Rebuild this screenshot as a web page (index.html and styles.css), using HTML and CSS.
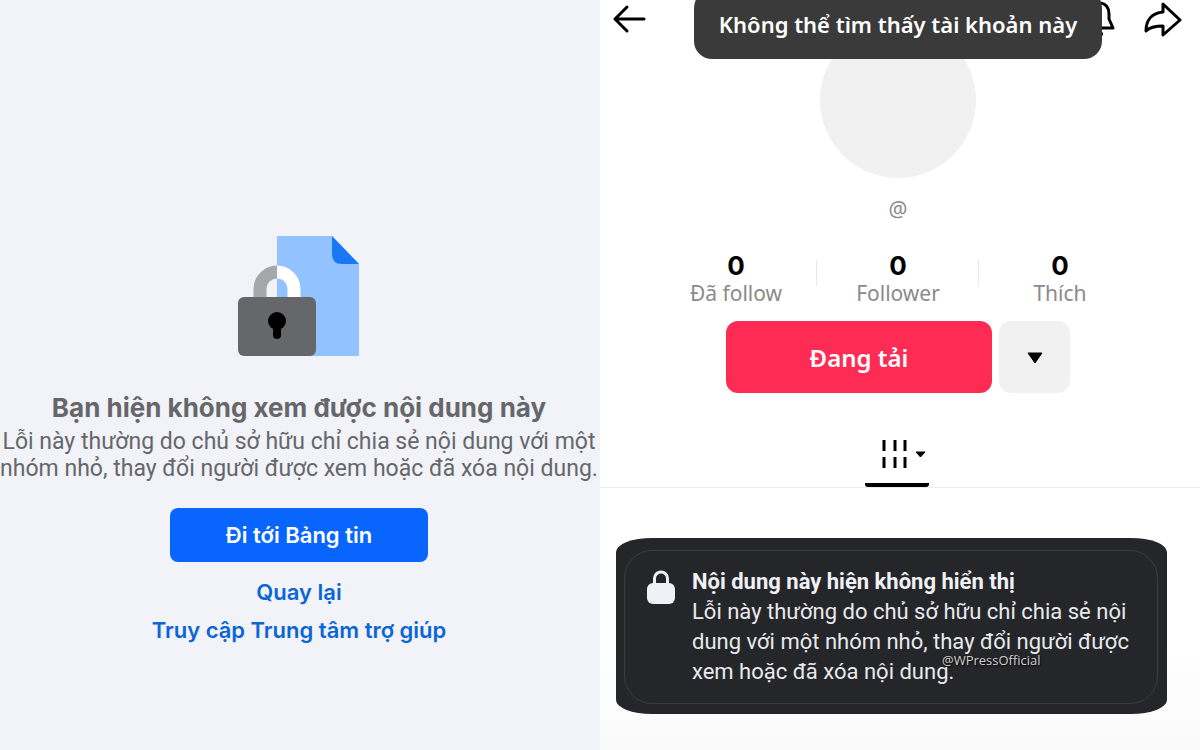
FILE: index.html
```html
<!DOCTYPE html>
<html lang="vi">
<head>
    <meta charset="UTF-8">
    <meta name="viewport" content="width=device-width, initial-scale=1.0">
    <title>Nội dung không hiển thị</title>
    <link rel="stylesheet" href="styles.css">
</head>
<body>
    <!-- Facebook -->
    <main class="panel blocked">
        <svg class="blocked-icon" width="122" height="120" viewBox="0 0 122 120" aria-hidden="true">
            <path d="M39 0H94L121 28V120H39Z" fill="#92c2ff"/>
            <path d="M94 0V18Q94 28 104 28H121Z" fill="#1877f2"/>
            <path d="M39 36A17 17 0 0 0 22 53V64" fill="none" stroke="#a5a7ab" stroke-width="13"/>
            <path d="M39 36A17 17 0 0 1 56 53V64" fill="none" stroke="#fff" stroke-width="13"/>
            <rect x="0" y="61" width="78" height="59" rx="6" fill="#66676b"/>
            <circle cx="39" cy="85" r="9"/>
            <path d="M39 88V99" stroke="#000" stroke-width="8" stroke-linecap="round"/>
        </svg>
        <h1>Bạn hiện không xem được nội dung này</h1>
        <p>Lỗi này thường do chủ sở hữu chỉ chia sẻ nội dung với một<br>nhóm nhỏ, thay đổi người được xem hoặc đã xóa nội dung.</p>
        <button class="feed-button" type="button">Đi tới Bảng tin</button>
        <a href="#back">Quay lại</a>
        <a href="#help">Truy cập Trung tâm trợ giúp</a>
    </main>

    <!-- TikTok -->
    <section class="panel profile">
        <header class="topbar">
            <button type="button" aria-label="Quay lại trang trước">
                <svg width="34" height="30" viewBox="0 0 34 30"><path d="M15 3L3 15L15 27M3 15H32" fill="none" stroke="#000" stroke-width="3" stroke-linecap="round" stroke-linejoin="round"/></svg>
            </button>
            <div class="topbar-actions">
                <button type="button" aria-label="Thông báo">
                    <svg width="34" height="38" viewBox="0 0 34 38"><path d="M17 3C10 3 7 8 7 14V19L3 28H31L27 19V14C27 8 24 3 17 3ZM13 34H21" fill="none" stroke="#000" stroke-width="3" stroke-linejoin="round"/></svg>
                </button>
                <button type="button" aria-label="Chia sẻ">
                    <svg width="38" height="38" viewBox="0 0 38 38"><path d="M19 4L36 20L19 35V26C11 26 6 27 2 31C2 20 8 13 19 12Z" fill="none" stroke="#000" stroke-width="3" stroke-linejoin="round"/></svg>
                </button>
            </div>
        </header>
        <div class="toast" role="status">Không thể tìm thấy tài khoản này</div>

        <div class="account">
            <div class="avatar"></div>
            <div class="handle">@</div>
            <div class="stats">
                <div><strong>0</strong><span>Đã follow</span></div>
                <div><strong>0</strong><span>Follower</span></div>
                <div><strong>0</strong><span>Thích</span></div>
            </div>
            <div class="actions">
                <button class="loading-button" type="button">Đang tải</button>
                <button class="more-button" type="button" aria-label="Thêm">
                    <svg width="18" height="14" viewBox="0 0 18 14"><path d="M2 3H16L9 13Z" stroke="#000" stroke-linejoin="round"/></svg>
                </button>
            </div>
        </div>
        <nav class="tabs">
            <button type="button" aria-label="Video">
                <svg width="46" height="30" viewBox="0 0 46 30">
                    <path d="M3 1V12M14 1V12M24 1V12M3 18V29M14 18V29M24 18V29" fill="none" stroke="#000" stroke-width="3"/>
                    <path d="M35 13H44L39.500 18Z" stroke="#000" stroke-linejoin="round"/>
                </svg>
            </button>
        </nav>

        <!-- thông báo nội dung bị ẩn -->
        <div class="notice">
            <div class="notice-inner">
                <svg width="28" height="34" viewBox="0 0 28 34" aria-hidden="true">
                    <path d="M7.500 14V8.500A6.500 6.500 0 0 1 20.500 8.500V14" fill="none" stroke="#f0f1f6" stroke-width="3"/>
                    <rect x="0" y="13" width="28" height="21" rx="6" fill="#f0f1f6"/>
                </svg>
                <div>
                    <h2>Nội dung này hiện không hiển thị</h2>
                    <p>Lỗi này thường do chủ sở hữu chỉ chia sẻ nội<br>dung với một nhóm nhỏ, thay đổi người được<br>xem hoặc đã xóa nội dung.</p>
                </div>
            </div>
            <span class="watermark">@WPressOfficial</span>
        </div>
    </section>
</body>
</html>
```
FILE: styles.css
```css
* {
    box-sizing: border-box;
}

body {
    margin: 0;
    min-height: 100vh;
    display: grid;
    grid-template-columns: 1fr 1fr;
    font-family: Inter, "Liberation Sans", sans-serif;
}

h1, h2, p {
    margin: 0;
}

button {
    border: none;
    padding: 0;
    background: none;
    font-family: inherit;
    cursor: pointer;
}

svg {
    display: block;
    flex-shrink: 0;
}

.panel {
    min-width: 0;
}

/* Facebook */
.blocked {
    display: flex;
    flex-direction: column;
    align-items: center;
    padding: 236px 2px 0 0;
    background: #f2f3f8;
    color: #65676b;
    white-space: nowrap;
}

.blocked h1 {
    margin-top: 32px;
    font-size: 26px;
    line-height: 40px;
}

.blocked p {
    font-family: Roboto, sans-serif;
    font-size: 23px;
    line-height: 27px;
    text-align: center;
}

.feed-button {
    width: 258px;
    height: 54px;
    margin: 26px 0 11px;
    border-radius: 8px;
    background: #0866ff;
    color: #fff;
    font-size: 22px;
    font-weight: 600;
}

.blocked a {
    color: #0a66d6;
    font-size: 22px;
    font-weight: 600;
    line-height: 38px;
    text-decoration: none;
}

/* TikTok */
.profile {
    position: relative;
    background: linear-gradient(#fff 85%, #fafafa);
    font-family: "Noto Sans", sans-serif;
}

.topbar {
    display: flex;
    justify-content: space-between;
    align-items: center;
    height: 38px;
    padding: 0 18px 0 12px;
}

.topbar-actions {
    display: flex;
    gap: 28px;
}

.toast {
    position: absolute;
    top: -10px;
    left: 94px;
    right: 98px;
    height: 69px;
    padding-top: 10px;
    border-radius: 18px;
    background: #3a3a3a;
    color: #fff;
    font-size: 22px;
    font-weight: 600;
    line-height: 48px;
    text-align: center;
    white-space: nowrap;
}

.account {
    display: flex;
    flex-direction: column;
    align-items: center;
    margin-top: -16px;
    padding-right: 4px;
}

.avatar {
    width: 156px;
    height: 156px;
    border-radius: 50%;
    background: #f1f1f1;
}

.handle {
    margin-top: 16px;
    color: #8a8a8a;
    font-size: 21px;
    line-height: 30px;
}

.stats {
    display: grid;
    grid-template-columns: repeat(3, 162px);
    margin-top: 28px;
}

.stats div {
    display: flex;
    flex-direction: column;
    text-align: center;
    background: linear-gradient(#e8e8e8, #e8e8e8) no-repeat right 8px / 1px 26px;
}

.stats div:last-child {
    background: none;
}

.stats strong {
    font-family: Inter, sans-serif;
    font-size: 26px;
    line-height: 28px;
}

.stats span {
    color: #8a8a8a;
    font-size: 21px;
    line-height: 26px;
}

.actions {
    display: flex;
    gap: 7px;
    margin-top: 15px;
}

.actions button {
    height: 72px;
    border-radius: 12px;
}

.loading-button {
    width: 266px;
    background: #fe2c55;
    color: #fff;
    font-size: 24px;
    font-weight: 600;
}

.more-button {
    display: flex;
    justify-content: center;
    align-items: center;
    width: 71px;
    background: #f1f1f1;
}

.tabs {
    display: flex;
    justify-content: center;
    margin-top: 46px;
    padding-right: 6px;
    border-bottom: 1px solid #ebebeb;
}

.tabs button {
    display: flex;
    justify-content: flex-end;
    width: 64px;
    height: 48px;
    padding-right: 2px;
    border-bottom: 4px solid #000;
    border-radius: 3px;
}

.notice {
    position: relative;
    margin: 50px 33px 0 16px;
    padding: 12px 9px 10px 8px;
    border-radius: 36px / 14px;
    background: #252629;
    color: #e8e9ed;
    font-family: Roboto, sans-serif;
    white-space: nowrap;
}

.notice-inner {
    display: flex;
    gap: 17px;
    padding: 16px 22px;
    border: 1px solid #3c3d40;
    border-radius: 28px;
}

.notice-inner svg {
    margin-top: 3px;
}

.notice h2 {
    color: #f0f1f6;
    font-size: 22px;
    line-height: 30px;
}

.notice p {
    font-size: 22px;
    line-height: 30px;
}

.watermark {
    position: absolute;
    top: 112px;
    left: 326px;
    color: #d0d0d0;
    font-family: "Open Sans", sans-serif;
    font-size: 13px;
    line-height: 20px;
    text-shadow: 1px 1px 2px #000;
}
```
